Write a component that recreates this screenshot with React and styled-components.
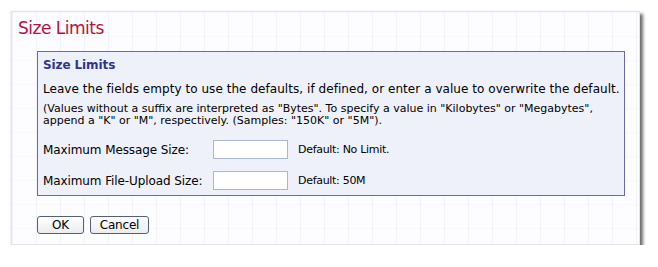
import React from "react";
import styled, { createGlobalStyle } from "styled-components";

const Global = createGlobalStyle`
  html, body { margin: 0; padding: 0; background: #ffffff; }
  body { font-family: "DejaVu Sans", Verdana, sans-serif; color: #000; }
`;

const Page = styled.div`
  padding: 11px 0 0 11px;
`;

const Panel = styled.div`
  box-sizing: border-box;
  width: 629px;
  height: 234px;
  border: 1px solid #e4e2ea;
  background-color: #fdfcff;
  background-image:
    linear-gradient(to right, rgba(215, 215, 235, 0.28) 1px, transparent 1px),
    linear-gradient(to bottom, rgba(225, 225, 240, 0.2) 1px, transparent 1px);
  background-size: 24px 24px;
  box-shadow: 3px 3px 3px rgba(60, 60, 60, 0.75), -1px 0 2px rgba(0, 0, 0, 0.06);
  padding: 6px 0 0 6px;
`;

const Title = styled.h1`
  margin: 0;
  font-weight: normal;
  font-size: 17px;
  letter-spacing: -0.5px;
  line-height: 20px;
  color: #b5123f;
`;

const Body = styled.div`
  padding: 13px 0 0 19px;
`;

const Fieldset = styled.div`
  box-sizing: border-box;
  width: 588px;
  height: 145px;
  border: 1px solid #6a6aa6;
  background: #eff1fa;
  padding: 5px 0 0 5px;
`;

const Legend = styled.div`
  font-weight: bold;
  font-size: 12px;
  letter-spacing: -0.1px;
  color: #2e3590;
  line-height: 16px;
`;

const Lead = styled.p`
  margin: 8px 0 0;
  font-size: 12px;
  letter-spacing: 0.05px;
  line-height: 16px;
`;

const Note = styled.p`
  margin: 6px 0 0;
  font-size: 11px;
  letter-spacing: 0;
  line-height: 12px;
`;

const Rows = styled.div`
  margin-top: 13px;
  display: flex;
  flex-direction: column;
  gap: 12px;
`;

const Row = styled.div`
  display: flex;
  align-items: center;
  height: 19px;
`;

const Label = styled.label`
  width: 170px;
  font-size: 12px;
  letter-spacing: -0.1px;
`;

const Input = styled.input`
  box-sizing: border-box;
  width: 75px;
  height: 19px;
  border: 1px solid #a9b8cc;
  background: #ffffff;
  margin: 0;
  padding: 0 3px;
`;

const Hint = styled.span`
  margin-left: 10px;
  font-size: 11px;
  letter-spacing: -0.3px;
`;

const Buttons = styled.div`
  display: flex;
  gap: 6px;
  padding: 20px 0 0 0;
`;

const Button = styled.button`
  box-sizing: border-box;
  height: 18px;
  min-width: ${(p) => p.$w}px;
  padding: 0 6px;
  border: 1px solid #52607a;
  border-radius: 3px;
  background: linear-gradient(#ffffff, #ececec);
  font-family: "DejaVu Sans", Verdana, sans-serif;
  font-size: 12px;
  letter-spacing: -0.2px;
  line-height: 14px;
  color: #000;
`;

export default function App() {
  return (
    <>
      <Global />
      <Page>
        <Panel>
          <Title>Size Limits</Title>
          <Body>
            <Fieldset>
              <Legend>Size Limits</Legend>
              <Lead>
                Leave the fields empty to use the defaults, if defined, or enter a value to overwrite the default.
              </Lead>
              <Note>
                (Values without a suffix are interpreted as "Bytes". To specify a value in "Kilobytes" or "Megabytes",
                <br />
                append a "K" or "M", respectively. (Samples: "150K" or "5M").
              </Note>
              <Rows>
                <Row>
                  <Label>Maximum Message Size:</Label>
                  <Input type="text" />
                  <Hint>Default: No Limit.</Hint>
                </Row>
                <Row>
                  <Label>Maximum File-Upload Size:</Label>
                  <Input type="text" />
                  <Hint>Default: 50M</Hint>
                </Row>
              </Rows>
            </Fieldset>
            <Buttons>
              <Button $w={47}>OK</Button>
              <Button $w={59}>Cancel</Button>
            </Buttons>
          </Body>
        </Panel>
      </Page>
    </>
  );
}
